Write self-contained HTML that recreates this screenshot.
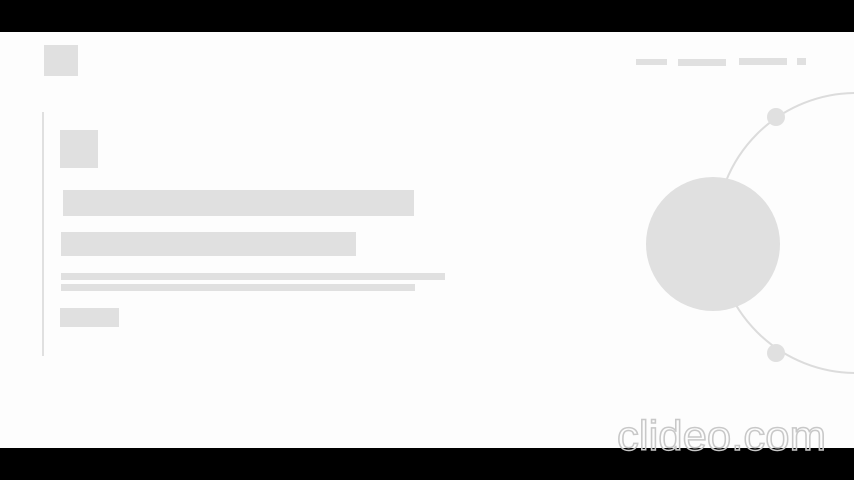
<!DOCTYPE html>
<html><head><style>
body{margin:0;width:854px;height:480px;background:#fdfdfd;position:relative;overflow:hidden;font-family:"Liberation Sans",sans-serif}
div{position:absolute;background:#e0e0e0}
.k{background:#000}
</style></head><body>
<div class="k" style="left:0;top:0;width:854px;height:32px"></div>
<div class="k" style="left:0;top:448px;width:854px;height:32px"></div>
<div style="left:44px;top:45px;width:34px;height:31px"></div>
<div style="left:42px;top:112px;width:2px;height:244px"></div>
<div style="left:60px;top:130px;width:38px;height:38px"></div>
<div style="left:63px;top:190px;width:351px;height:26px"></div>
<div style="left:61px;top:232px;width:295px;height:24px"></div>
<div style="left:61px;top:273px;width:384px;height:7px"></div>
<div style="left:61px;top:284px;width:354px;height:7px"></div>
<div style="left:60px;top:308px;width:59px;height:19px"></div>
<div style="left:636px;top:59px;width:31px;height:6px"></div>
<div style="left:678px;top:59px;width:48px;height:7px"></div>
<div style="left:739px;top:58px;width:48px;height:7px"></div>
<div style="left:797px;top:58px;width:9px;height:7px"></div>
<svg style="position:absolute;left:0;top:0" width="854" height="480">
<circle cx="856" cy="233" r="140" fill="none" stroke="#dcdcdc" stroke-width="2"/>
<circle cx="713" cy="244" r="67" fill="#e0e0e0"/>
<circle cx="776" cy="117" r="9" fill="#e0e0e0"/>
<circle cx="776" cy="353" r="9" fill="#e0e0e0"/>
<text x="617" y="450" font-family="Liberation Sans,sans-serif" font-size="42" fill="none" stroke="#c8c8c8" stroke-width="1.5" textLength="209" lengthAdjust="spacingAndGlyphs">clideo.com</text>
</svg>
</body></html>
